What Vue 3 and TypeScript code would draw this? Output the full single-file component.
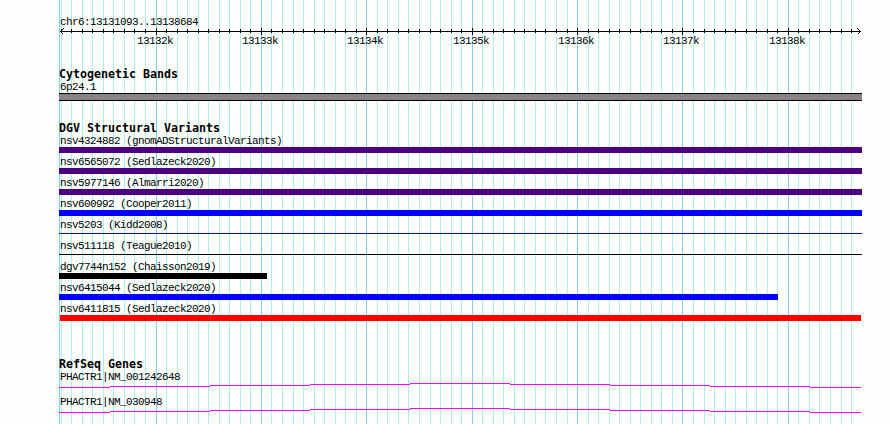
<script setup lang="ts">
interface Feature { label: string; kind: string; start: number; width: number; thin?: boolean }

const START = 13131093
const PX_PER_BASE = 0.10539
const ORIGIN = 60.41
const toX = (bp: number): number => Math.floor(ORIGIN + (bp - START) * PX_PER_BASE + 0.003)

const ticks = Array.from({ length: 76 }, (_, i) => {
  const bp = 13131100 + i * 100
  return { bp, x: toX(bp), major: bp % 1000 === 0 }
})
const majors = ticks.filter((t) => t.major)

const variants: Feature[] = [
  { label: 'nsv4324882 (gnomADStructuralVariants)', kind: 'indigo', start: 0, width: 803 },
  { label: 'nsv6565072 (Sedlazeck2020)', kind: 'indigo', start: 0, width: 803 },
  { label: 'nsv5977146 (Almarri2020)', kind: 'indigo', start: 0, width: 803 },
  { label: 'nsv600992 (Cooper2011)', kind: 'blue', start: 0, width: 803 },
  { label: 'nsv5203 (Kidd2008)', kind: 'blue', start: 0, width: 803, thin: true },
  { label: 'nsv511118 (Teague2010)', kind: 'black', start: 0, width: 803, thin: true },
  { label: 'dgv7744n152 (Chaisson2019)', kind: 'black', start: 0, width: 208 },
  { label: 'nsv6415044 (Sedlazeck2020)', kind: 'blue', start: 0, width: 719 },
  { label: 'nsv6411815 (Sedlazeck2020)', kind: 'red', start: 1, width: 801 },
]

const genes: string[] = ['PHACTR1|NM_001242648', 'PHACTR1|NM_030948']
const intron = 'M0 4.5H51M51 3.5H151M151 2.5H251M251 1.5H351M351 .5H451M451 1.5H551M551 2.5H651M651 3.5H751M751 4.5H802'
</script>

<template>
  <main class="browser">
    <svg class="grid" width="890" height="424" aria-hidden="true">
      <rect class="major" x="59" y="0" width="1" height="424" />
      <rect v-for="t in ticks" :key="t.bp" :class="t.major ? 'major' : 'minor'" :x="t.x" y="0" width="1" height="424" />
    </svg>
    <div class="tracks">
      <section class="ruler">
        <div class="label">chr6:13131093..13138684</div>
        <svg class="scale" width="803" height="24">
          <g shape-rendering="crispEdges">
            <path class="ink" d="M1 5.5H802" />
            <path class="ink" d="M4.5 2.5L1.5 5.5L4.5 8.5M798.5 2.5L801.5 5.5L798.5 8.5" />
            <rect v-for="t in ticks" :key="t.bp" :x="t.x - 59" :y="t.major ? 2 : 3" width="1" :height="t.major ? 7 : 4" />
          </g>
          <text v-for="t in majors" :key="t.bp" :x="t.x - 78" y="18">{{ t.bp / 1000 }}k</text>
        </svg>
      </section>

      <section class="bands">
        <h2>Cytogenetic Bands</h2>
        <div class="label">6p24.1</div>
        <div class="band"></div>
      </section>

      <section class="variants">
        <h2>DGV Structural Variants</h2>
        <div v-for="v in variants" :key="v.label" class="feature">
          <div class="label">{{ v.label }}</div>
          <div class="bar" :class="[v.kind, { thin: v.thin }]" :style="{ width: v.width + 'px', marginLeft: v.start + 'px' }"></div>
        </div>
      </section>

      <section class="genes">
        <h2>RefSeq Genes</h2>
        <div v-for="g in genes" :key="g" class="gene">
          <div class="label">{{ g }}</div>
          <svg width="803" height="5" shape-rendering="crispEdges"><path :d="intron" /></svg>
        </div>
      </section>
    </div>
  </main>
</template>

<style>
body { background: #fcfffc; }
</style>

<style scoped>
.browser { position: relative; width: 890px; height: 424px; overflow: hidden; background: #fcfffc; color: #000; font-family: "DejaVu Sans Mono", monospace; }
.grid { position: absolute; inset: 0; shape-rendering: crispEdges; }
.major { fill: #87ceeb; }
.minor { fill: #afeeee; }
.tracks { position: relative; display: flex; flex-direction: column; width: 803px; padding: 15px 0 0 59px; }
.label, .scale text { font-family: "Liberation Mono", monospace; font-size: 11px; letter-spacing: -0.6px; white-space: pre; }
.label { box-sizing: border-box; height: 12px; padding: 1px 0 0 1px; line-height: 12px; }
h2 { margin: 0; height: 12px; font-size: 11.63px; line-height: 12px; font-weight: 700; white-space: pre; }
svg { display: block; }
.ruler { height: 53px; }
.scale { margin-top: -1px; }
.ink { stroke: #000; fill: none; }
.bands { height: 54px; }
.band { height: 6px; margin-top: 1px; border-top: 1px solid #000; border-bottom: 1px solid #000; background: #878387; }
.variants { height: 236px; }
.feature { height: 21px; }
.bar { height: 6px; margin-top: 1px; }
.bar.thin { height: 1px; margin-top: 3px; }
.indigo { background: #4b0082; }
.blue { background: #00f; }
.black { background: #000; }
.red { background: #f00; }
.gene { height: 25px; }
.gene svg { margin-top: 1px; }
.gene svg path { stroke: #f0f; fill: none; }
</style>
